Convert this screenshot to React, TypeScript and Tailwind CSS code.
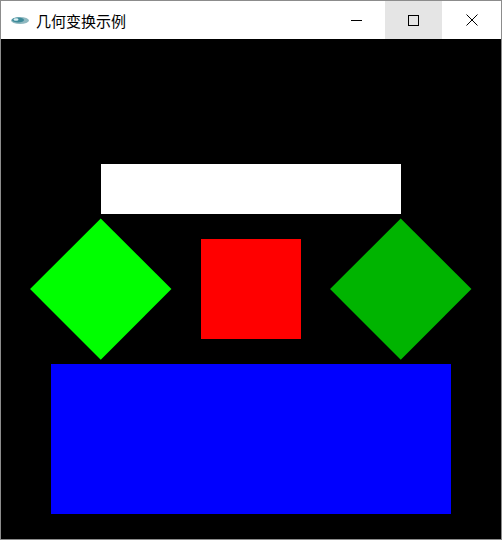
import React from 'react';

const App: React.FC = () => {
  return (
    <div className="w-[502px] h-[540px] bg-white border border-[#8c8c8c] flex flex-col overflow-hidden" style={{ fontFamily: '"Microsoft YaHei UI", "Noto Sans CJK SC", sans-serif' }}>
      {/* title bar */}
      <div className="h-[38px] flex items-stretch bg-white shrink-0">
        <div className="flex items-center flex-1 pl-[9px] gap-[6px]">
          <svg width="20" height="12" viewBox="0 0 20 12">
            <ellipse cx="10" cy="6.5" rx="9" ry="3.5" fill="#8fb8c0" />
            <ellipse cx="8" cy="6" rx="6" ry="2.5" fill="#3d8a99" />
            <ellipse cx="6" cy="5.5" rx="2.5" ry="1.2" fill="#d9eef2" />
          </svg>
          <span className="text-[15px] text-black leading-none">几何变换示例</span>
        </div>
        <div className="w-[58px] flex items-center justify-center">
          <div className="w-[11px] h-px bg-black" />
        </div>
        <div className="w-[57px] flex items-center justify-center bg-[#e5e5e5]">
          <div className="w-[11px] h-[11px] border border-black" />
        </div>
        <div className="w-[59px] flex items-center justify-center">
          <svg width="12" height="12" viewBox="0 0 12 12">
            <path d="M0.5 0.5 L11.5 11.5 M11.5 0.5 L0.5 11.5" stroke="#000" strokeWidth="1" />
          </svg>
        </div>
      </div>
      {/* canvas */}
      <div className="relative flex-1 bg-black">
        <div className="absolute left-[100px] top-[125px] w-[300px] h-[50px] bg-white" />
        <div className="absolute left-[50.25px] top-[200.25px] w-[99.5px] h-[99.5px] bg-[#00ff00] rotate-45" />
        <div className="absolute left-[200px] top-[200px] w-[100px] h-[100px] bg-[#ff0000]" />
        <div className="absolute left-[350.25px] top-[200.25px] w-[99.5px] h-[99.5px] bg-[#00b400] rotate-45" />
        <div className="absolute left-[50px] top-[325px] w-[400px] h-[150px] bg-[#0000ff]" />
      </div>
    </div>
  );
};

export default App;
